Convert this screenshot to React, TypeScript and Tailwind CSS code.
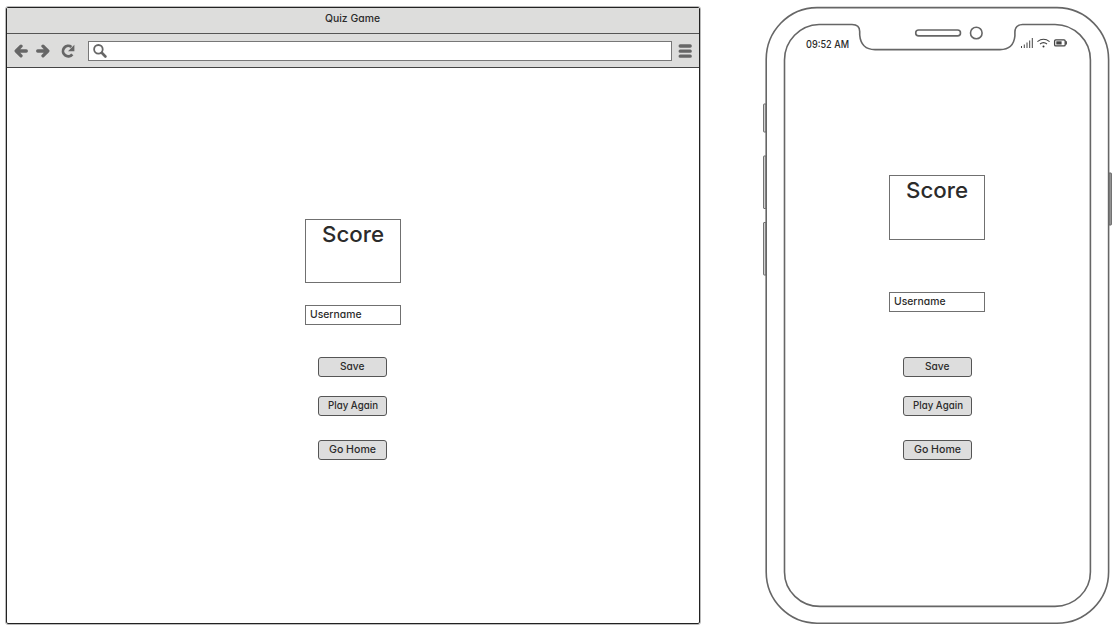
import React from "react";

const font = "font-['Inter','Liberation_Sans',sans-serif] [font-feature-settings:'cv11','ss03']";

type LabelProps = { children: string; width: number; size?: number; baseline?: number; weight?: number };

function Label({ children, width, size = 10.5, baseline = 11, weight = 450 }: LabelProps) {
  return (
    <svg width={width} height={size + 6} className="block shrink-0 overflow-visible" fill="#2b2b2b" stroke="none">
      <text x="0" y={baseline} fontSize={size} fontWeight={weight} textLength={width} lengthAdjust="spacingAndGlyphs">
        {children}
      </text>
    </svg>
  );
}

function Button({ label, width, gap }: { label: string; width: number; gap: string }) {
  return (
    <button
      className={`flex h-5 w-[69px] items-center justify-center rounded-[3px] border border-[#555] bg-[#ddd] ${gap}`}
    >
      <Label width={width}>{label}</Label>
    </button>
  );
}

type GameOverProps = { scoreHeight: string; fieldGap: string; buttonGap: string; buttonShift: string };

function GameOver({ scoreHeight, fieldGap, buttonGap, buttonShift }: GameOverProps) {
  return (
    <div className="flex w-24 flex-col">
      <div className={`flex w-24 justify-center border border-[#707070] ${scoreHeight}`}>
        <Label width={62} size={22} baseline={22} weight={500}>Score</Label>
      </div>
      <div className={`flex h-5 w-24 items-center border border-[#707070] pl-[3.5px] ${fieldGap}`}>
        <Label width={51.5}>Username</Label>
      </div>
      <div className={`flex flex-col ${buttonShift}`}>
        <Button label="Save" width={24.5} gap={buttonGap} />
        <Button label="Play Again" width={50} gap="mt-[19px]" />
        <Button label="Go Home" width={47} gap="mt-6" />
      </div>
    </div>
  );
}

function BrowserWindow() {
  return (
    <section className="ml-[6px] mt-[7px] flex h-[617px] w-[694px] shrink-0 flex-col rounded-[2px] border border-[#222] outline outline-1 outline-[#bbb]">
      <div className="flex h-[26px] justify-center border-b border-[#555] bg-[#dddddc] pr-[1px] pt-[3px]">
        <Label width={55}>Quiz Game</Label>
      </div>
      <div className="flex h-[34px] items-center border-b border-[#444] bg-[#dddddc] pl-[7px]">
        <svg width="64" height="18" fill="none" stroke="#666" strokeWidth="3.3" strokeLinecap="round" strokeLinejoin="round">
          <path d="M12.3 9H2.8M7 4.2 2.2 9 7 13.8M23.7 9h9.5M29 4.2 33.8 9 29 13.8" />
          <path d="M58.3 12.3a5.2 5.2 0 1 1-.9-7.3" strokeWidth="2.8" strokeLinecap="butt" />
          <path d="M60.4 2.8v6.4H54Z" fill="#666" stroke="none" />
        </svg>
        <div className="ml-[10px] flex h-[20px] w-[584px] items-center border border-[#777] bg-white pl-1">
          <svg width="14" height="14" fill="none" stroke="#666">
            <circle cx="5.4" cy="5.3" r="4.3" strokeWidth="1.8" />
            <path d="m9 9 3.4 3.5" strokeWidth="2.6" strokeLinecap="round" />
          </svg>
        </div>
        <svg width="14" height="14" className="ml-[6px]" stroke="#666" strokeWidth="3.3" strokeLinecap="round">
          <path d="M2.2 2h10M2.2 7.2h10M2.2 12.2h10" />
        </svg>
      </div>
      <main className="flex flex-1 justify-center pt-[151px]">
        <GameOver scoreHeight="h-[64px]" fieldGap="mt-[22px]" buttonGap="mt-[32px]" buttonShift="pl-[13px]" />
      </main>
    </section>
  );
}

function PhoneFrame() {
  return (
    <svg
      viewBox="760 0 355 636"
      className="pointer-events-none absolute inset-0 h-[636px] w-[355px]"
      fill="none"
      stroke="#666"
      strokeWidth="1.6"
    >
      <g strokeWidth="1" fill="#ddd">
        <rect x="763.6" y="104" width="2.5" height="28" rx="0.5" />
        <rect x="763.6" y="156" width="2.5" height="52.5" rx="0.5" />
        <rect x="763.6" y="222.5" width="2.5" height="52.5" rx="0.5" />
        <rect x="1108.8" y="173" width="2.6" height="52" rx="0.5" fill="#999" />
      </g>
      <path d="M817 7.6H1057A52 52 0 0 1 1108.6 60V572A52 51.2 0 0 1 1057 623.2H817A51 51.2 0 0 1 766.2 572V60A51 52 0 0 1 817 7.6Z" />
      <path d="M819 24.5H852Q859.7 24.5 859.7 31.5V35Q861 49.6 875 49.6H1000Q1013.5 49.6 1014.9 36V32Q1015.3 24.5 1022.5 24.5H1055A35.5 35.5 0 0 1 1090.4 60V572A35.5 34.4 0 0 1 1055 606.4H820A35.5 34.4 0 0 1 784.5 572V60A35.5 35.5 0 0 1 819 24.5Z" />
      <rect x="915.7" y="30" width="44.8" height="5.9" rx="2.95" />
      <circle cx="976.3" cy="33" r="5.8" />
    </svg>
  );
}

function StatusIcons() {
  return (
    <svg width="47" height="12" viewBox="1020 37 47 12" fill="none" stroke="#444">
      <path d="M1021.5 46v2M1024.3 44.5V48M1027 42.5V48M1029.7 40.5V48M1032.3 38V48" strokeWidth="1" />
      <path d="M1037.4 41.6q6.1-4.7 12.2 0M1040 44q3.5-2.8 7 0" strokeWidth="1.1" />
      <circle cx="1043.5" cy="46.5" r="1" fill="#333" stroke="none" />
      <rect x="1054.6" y="39.9" width="10.6" height="6" rx="1.2" strokeWidth="1.3" />
      <rect x="1056.3" y="41.3" width="5.3" height="3.2" fill="#444" stroke="none" />
      <path d="M1066.3 41.3v3.2" strokeWidth="1.2" />
    </svg>
  );
}

function Phone() {
  return (
    <section className="relative ml-[60px] flex h-[636px] w-[355px] shrink-0 flex-col">
      <PhoneFrame />
      <header className="mt-[36px] flex h-[17px] justify-between pl-[46px] pr-[48px]">
        <div className="pt-[1px]">
          <Label width={43}>09:52 AM</Label>
        </div>
        <div className="pt-[1px]">
          <StatusIcons />
        </div>
      </header>
      <main className="flex justify-center pr-[1px] pt-[122px]">
        <GameOver scoreHeight="h-[65px]" fieldGap="mt-[52px]" buttonGap="mt-[45px]" buttonShift="pl-[14px]" />
      </main>
    </section>
  );
}

export default function App() {
  return (
    <div className={`flex h-[636px] w-[1115px] overflow-hidden bg-white text-[#2b2b2b] ${font}`}>
      <BrowserWindow />
      <Phone />
    </div>
  );
}
